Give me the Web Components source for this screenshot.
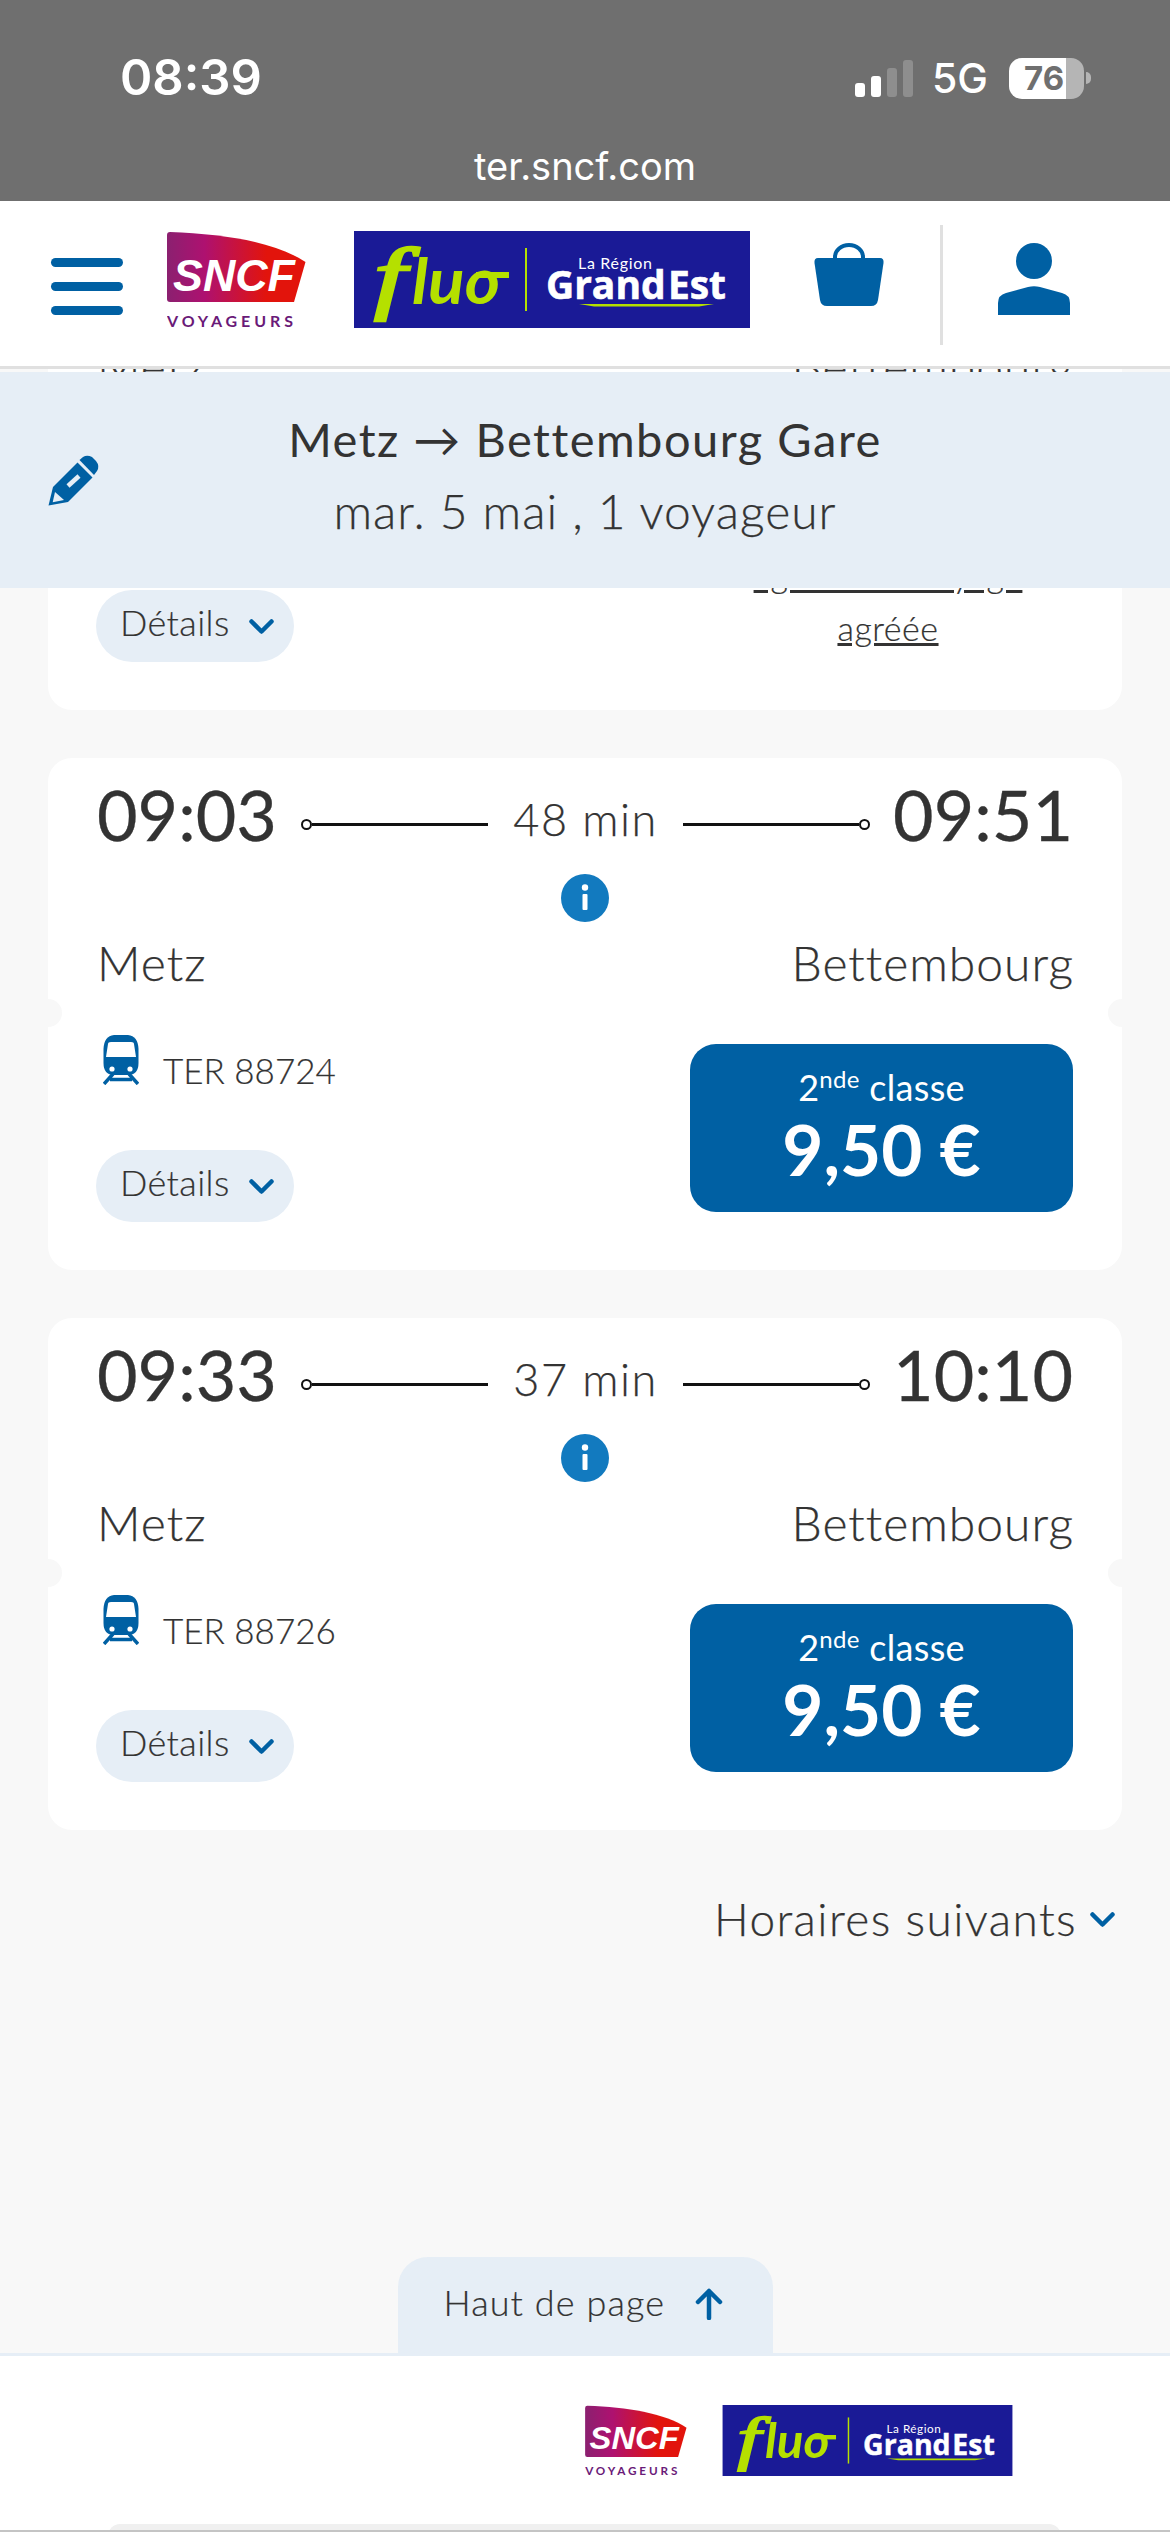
<!DOCTYPE html>
<html lang="fr"><head><meta charset="utf-8"><title>TER SNCF</title>
<style>
html,body{margin:0;padding:0;background:#f8f8f8}
body{font-family:"Lato","Noto Sans",sans-serif;color:#333;font-weight:300}
</style></head><body>
<app-screen>
  <status-bar slot="status" time="08:39" url="ter.sncf.com"></status-bar>
  <site-header slot="header"></site-header>
  <trip-list slot="list">
    <trip-card style="--details-gap:102px">
      <span slot="dep">08:33</span><span slot="dur">48 min</span><span slot="arr">09:21</span>
      <span slot="from">Metz</span><span slot="to">Bettembourg</span>
      <span slot="train">TER 88722</span>
      <sale-note slot="fare">Vente uniquement en <u>agence de voyage agréée</u></sale-note>
    </trip-card>
    <trip-card>
      <span slot="dep">09:03</span><span slot="dur">48 min</span><span slot="arr">09:51</span>
      <span slot="from">Metz</span><span slot="to">Bettembourg</span>
      <span slot="train">TER 88724</span>
      <price-button slot="fare" price="9,50 €"></price-button>
    </trip-card>
    <trip-card>
      <span slot="dep">09:33</span><span slot="dur">37 min</span><span slot="arr">10:10</span>
      <span slot="from">Metz</span><span slot="to">Bettembourg</span>
      <span slot="train">TER 88726</span>
      <price-button slot="fare" price="9,50 €"></price-button>
    </trip-card>
    <more-link>Horaires suivants</more-link>
  </trip-list>
  <search-banner slot="banner" route="Metz → Bettembourg Gare" sub="mar. 5 mai , 1 voyageur"></search-banner>
  <top-tab slot="tab">Haut de page</top-tab>
  <site-footer slot="footer"></site-footer>
</app-screen>
<script>
const BLUE='#0060a3';
function def(name,html){
  customElements.define(name,class extends HTMLElement{
    constructor(){super();const r=this.attachShadow({mode:'open'});
      r.innerHTML=typeof html==='function'?html(this):html;}
    connectedCallback(){
      if(typeof html==='function'&&this.hasAttributes()) this.shadowRoot.innerHTML=html(this);
    }
  });
}
const a=(el,n)=>el.getAttribute(n)||'';

def('app-screen',`<style>
:host{display:flex;flex-direction:column;width:1170px;height:2532px;overflow:hidden;background:#f8f8f8;position:relative}
main{flex:1;min-height:0;position:relative;overflow:hidden;display:flex;flex-direction:column}
.banner{position:absolute;left:0;right:0;top:3px;z-index:2}
.tab{margin-top:auto;align-self:center;display:block;flex:none}
</style>
<slot name="status"></slot><slot name="header"></slot>
<main><slot name="list"></slot><div class="banner"><slot name="banner"></slot></div><div class="tab"><slot name="tab"></slot></div></main>
<slot name="footer"></slot>`);

def('status-bar',el=>`<style>
:host{display:block;height:201px;background:#6f6f6f;color:#fff;font-family:"Inter","Liberation Sans",sans-serif;flex:none}
.top{display:flex;align-items:center;padding:0 79px 0 120px;box-sizing:border-box;height:156px}
.time{font-size:49px;font-weight:600;line-height:56px}
.right{margin-left:auto;display:flex;align-items:center}
.sig{display:flex;align-items:flex-end;gap:6px;height:37px}
.sig i{display:block;width:10px;border-radius:3px;background:#fff}
.sig i.off{background:#8e8e8e}
.g{font-size:41px;font-weight:500;margin:0 21px 0 19px;line-height:40px}
.bat{display:flex;align-items:center}
.cell{width:75px;height:41px;border-radius:13px;overflow:hidden;background:linear-gradient(90deg,#fff 0 57px,#b5b5b5 57px);color:#6f6f6f;font-size:33px;font-weight:700;line-height:41px;box-sizing:border-box;padding-left:15px}
.nub{width:5px;height:12px;background:#b5b5b5;border-radius:0 5px 5px 0;margin-left:2px}
.url{text-align:center;font-size:38px;line-height:44px;font-weight:400;margin-top:-12px}
</style>
<div class="top"><span class="time">${a(el,'time')}</span>
<div class="right"><div class="sig"><i style="height:14px"></i><i style="height:21px"></i><i class="off" style="height:29px"></i><i class="off" style="height:37px"></i></div>
<span class="g">5G</span><div class="bat"><div class="cell">76</div><div class="nub"></div></div></div></div>
<div class="url">${a(el,'url')}</div>`);

def('sncf-logo',`<style>:host{display:block;width:139px;height:97px;flex:none}svg{display:block;width:100%;height:100%}</style>
<svg viewBox="0 0 139 97"><defs><linearGradient id="g" x1="0" x2="1" y1="0" y2="0"><stop offset="0" stop-color="#8b2070"/><stop offset=".27" stop-color="#ae1170"/><stop offset=".72" stop-color="#e2140c"/><stop offset="1" stop-color="#e2140c"/></linearGradient></defs>
<path fill="url(#g)" d="M3 1C58 3 108 11 138.500 31L127 71H3Q0 71 0 68V4Q0 1 3 1Z"/>
<text x="6" y="60" font-family="Liberation Sans" font-weight="700" font-style="italic" font-size="44" fill="#fff" textLength="122" lengthAdjust="spacingAndGlyphs">SNCF</text>
<text x="0" y="96" font-family="Lato" font-weight="700" font-size="16" fill="#6a1a78" textLength="126" lengthAdjust="spacing">VOYAGEURS</text></svg>`);

def('fluo-logo',`<style>:host{display:block;width:396px;height:97px;flex:none}svg{display:block;width:100%;height:100%}</style>
<svg viewBox="0 0 396 97"><rect width="396" height="97" fill="#1a1a96"/>
<text x="20" y="73" fill="#b5e000" stroke="#b5e000" stroke-width="2.500" font-size="80" font-style="italic" font-family="Liberation Serif" textLength="32" lengthAdjust="spacingAndGlyphs">f</text>
<text x="58" y="73" fill="#b5e000" font-size="64" font-style="italic" font-weight="700" font-family="Lato" textLength="88" lengthAdjust="spacingAndGlyphs">luo</text>
<rect x="122" y="41" width="33" height="6" fill="#b5e000"/>
<rect x="171" y="17" width="2" height="63" fill="#b5e000"/>
<text x="224" y="38" fill="#fff" font-size="16" font-weight="400" font-family="Lato" textLength="74">La Région</text>
<text x="192" y="68" fill="#fff" font-size="40" font-weight="700" font-family="Open Sans" stroke="#fff" stroke-width=".6" textLength="180" lengthAdjust="spacingAndGlyphs" word-spacing="-8">Grand Est</text>
<path d="M225 73H360L345 75.500H240Z" fill="#b5e000"/></svg>`);

def('site-header',`<style>
:host{display:flex;align-items:flex-start;height:168px;background:#fff;border-bottom:3px solid #e0e0e0;box-sizing:border-box;flex:none;position:relative;z-index:3}
.menu{margin:57px 44px 0 51px;width:72px;display:flex;flex-direction:column;gap:15px}
.menu i{display:block;height:9px;border-radius:5px;background:${BLUE}}
sncf-logo{margin-top:30px}
fluo-logo{margin:30px 0 0 48px}
.bag{margin:42px 0 0 64px;width:70px;height:63px;display:block}
.sep{width:3px;height:120px;background:#e0e0e0;margin:24px 0 0 56px}
.user{margin:42px 0 0 55px;width:72px;height:72px;display:block}
</style>
<div class="menu"><i></i><i></i><i></i></div><sncf-logo></sncf-logo><fluo-logo></fluo-logo>
<svg class="bag" viewBox="0 0 70 63"><path fill="${BLUE}" d="M4 15H66Q70 15 69.500 20L64 57Q63 63 57 63H13Q7 63 6 57L.5 20Q0 15 4 15Z"/><path fill="none" stroke="${BLUE}" stroke-width="4" d="M21 16V14A14 12 0 0 1 49 14V16"/></svg>
<div class="sep"></div>
<svg class="user" viewBox="0 0 72 72"><circle cx="36" cy="18" r="18" fill="${BLUE}"/><path fill="${BLUE}" d="M0 72V60Q0 52 8 50L30 44Q36 42.500 42 44L64 50Q72 52 72 60V72Z"/></svg>`);

def('search-banner',el=>`<style>
:host{display:grid;grid-template-columns:1fr auto 1fr;align-items:center;height:216px;background:#e6eef6;color:#333}
svg{display:block;margin:0 0 0 40px;width:70px;height:70px}
.t{text-align:center;line-height:72px;margin-top:-11px}
.a{font-size:47px;font-weight:400;letter-spacing:1.500px}
.b{font-size:48px;font-weight:300;letter-spacing:1px;-webkit-text-stroke:.25px #333}
</style>
<svg viewBox="0 0 70 70"><path fill="${BLUE}" d="M13 42L37.500 17.500 52.500 32.500 28 57 8.500 60.500Z"/><path fill="${BLUE}" d="M39.500 15L43 12Q47 9.500 52 12L56 16Q60 21 57 26L54 30Z"/><path fill="#e6eef6" d="M15 47L24 55 12.700 57.300Z"/><path stroke="#e6eef6" stroke-width="4.500" d="M28 41L39 31"/></svg>
<div class="t"><div class="a">${a(el,'route')}</div><div class="b">${a(el,'sub')}</div></div><span></span>`);

def('trip-list',`<style>
:host{display:flex;flex-direction:column;gap:48px;padding:0 48px;margin-top:-208px;flex:none}
</style><slot></slot>`);

const chev=`<svg width="25" height="15" viewBox="0 0 25 15" style="display:block"><path d="M2.500 2.500L12.500 12.500 22.500 2.500" fill="none" stroke="${BLUE}" stroke-width="4.500" stroke-linecap="round" stroke-linejoin="round"/></svg>`;

def('trip-card',`<style>
:host{display:block;background:#fff;border-radius:24px;position:relative;padding:20px 49px 48px;color:#333}
.n{position:absolute;width:28px;height:28px;border-radius:50%;background:#f8f8f8;top:var(--notch,241px)}
.times{display:flex;align-items:flex-start;height:72px}
.time{font-size:70px;line-height:72px;font-weight:400;flex:none;-webkit-text-stroke:.3px #333}
.time.arr{margin-left:auto}
.con{flex:1;display:flex;align-items:center;height:36px;margin:28px 23px 0 24px}
.dot{width:11px;height:11px;border:2.500px solid #111;border-radius:50%;box-sizing:border-box;flex:none}
.ln{flex:1;height:3px;background:#111}
.dur{font-size:45px;line-height:36px;margin:-10px 25px 0;flex:none;letter-spacing:1.500px;-webkit-text-stroke:.25px #333}
.info{display:block;width:48px;height:48px;margin:24px auto 0}
.st{display:flex;justify-content:space-between;font-size:48px;line-height:56px;margin:13px -1px 0 0;letter-spacing:1px;-webkit-text-stroke:.25px #333}
.low{display:flex;justify-content:space-between;margin-top:44px;align-items:flex-start}
.tr{display:flex;align-items:flex-end;height:50px;font-size:35px;line-height:36px;padding-left:6px;-webkit-text-stroke:.2px #333}
.tr svg{display:block;margin-right:24px;flex:none}
.tr span{display:block;margin-bottom:-3px}
details-pill{margin-top:var(--details-gap,65px)}
</style>
<div class="n" style="left:-14px"></div><div class="n" style="right:-14px"></div>
<div class="times"><span class="time"><slot name="dep"></slot></span>
<div class="con"><span class="dot"></span><span class="ln"></span><span class="dur"><slot name="dur"></slot></span><span class="ln"></span><span class="dot"></span></div>
<span class="time arr"><slot name="arr"></slot></span></div>
<svg class="info" viewBox="0 0 48 48"><circle cx="24" cy="24" r="24" fill="#127abf"/><circle cx="24" cy="13.500" r="3.200" fill="#fff"/><rect x="21.500" y="20" width="5" height="16" rx="1" fill="#fff"/></svg>
<div class="st"><span><slot name="from"></slot></span><span><slot name="to"></slot></span></div>
<div class="low"><div>
<div class="tr"><svg width="36" height="50" viewBox="0 0 36 50"><path fill="${BLUE}" d="M11 0H25Q35 1 35.500 14V28Q35.500 40 25 40H11Q.5 40 .5 28V14Q1 1 11 0Z"/><path fill="#fff" d="M5 9Q5 7 8 7H28Q31 7 31 9L33 22H3Z"/><circle cx="9" cy="34" r="2.600" fill="#fff"/><circle cx="27" cy="34" r="2.600" fill="#fff"/><path d="M10 39L1 49M26 39L35 49M7 44.500H29" fill="none" stroke="${BLUE}" stroke-width="3.500"/></svg><span><slot name="train"></slot></span></div>
<details-pill></details-pill></div>
<div><slot name="fare"></slot></div></div>`);

def('details-pill',`<style>
:host{display:flex;align-items:center;width:198px;height:72px;border-radius:36px;background:#e6eef6;box-sizing:border-box;padding:0 0 0 24px;font-size:36px;gap:19px;margin-left:-1px}
span{margin-top:-8px;letter-spacing:.4px;-webkit-text-stroke:.2px #333}
</style><span>Détails</span>${chev}`);

def('price-button',el=>`<style>
:host{display:block;width:383px;height:168px;margin-top:9px;background:${BLUE};border-radius:26px;color:#fff;text-align:center;box-sizing:border-box;padding-top:17px}
.c{font-size:36px;line-height:52px;font-weight:400;letter-spacing:.3px}
sup{font-size:24px;line-height:0;vertical-align:baseline;position:relative;top:-13px}
.p{font-size:71px;line-height:72px;font-weight:700}
</style><div class="c">2<sup>nde</sup> classe</div><div class="p">${a(el,'price')}</div>`);

def('sale-note',`<style>
:host{display:block;width:370px;text-align:center;font-size:34px;line-height:53px;margin-top:57px;color:#333;letter-spacing:.5px;-webkit-text-stroke:.2px #333}
</style><slot></slot>`);

def('more-link',`<style>
:host{display:flex;align-items:center;justify-content:flex-end;gap:13px;font-size:46px;line-height:56px;margin:13px 7px 0 0;color:#333;letter-spacing:1.400px;-webkit-text-stroke:.25px #333}
</style><span><slot></slot></span>${chev}`);

def('top-tab',`<style>
:host{display:flex;align-items:flex-start;width:375px;height:96px;background:#e6eef6;border-radius:30px 30px 0 0;box-sizing:border-box;padding:22px 0 0 46px;font-size:36px;line-height:46px;gap:30px;color:#333;letter-spacing:1.100px;-webkit-text-stroke:.2px #333}
svg{display:block;margin-top:9px}
</style><span><slot></slot></span><svg width="28" height="32" viewBox="0 0 28 32"><path d="M14 30V3M3 14L14 3 25 14" fill="none" stroke="${BLUE}" stroke-width="4.500" stroke-linecap="round" stroke-linejoin="round"/></svg>`);

def('site-footer',`<style>
:host{display:block;height:179px;background:#fff;border-top:3px solid #e6eef6;box-sizing:border-box;flex:none;position:relative}
.logos{display:flex;align-items:flex-start;justify-content:flex-end;gap:35px;padding:49px 157px 0 0}
sncf-logo{width:102px;height:71px}fluo-logo{width:291px;height:71px}
.bar{margin:48px 109px 0 108px;height:12px;background:#f0f0f0;border-radius:20px 20px 0 0;}
.line{position:absolute;left:0;right:0;bottom:0;height:2px;background:#c4c4c4}
</style><div class="logos"><sncf-logo></sncf-logo><fluo-logo></fluo-logo></div><div class="bar"></div><div class="line"></div>`);
</script>
</body></html>
